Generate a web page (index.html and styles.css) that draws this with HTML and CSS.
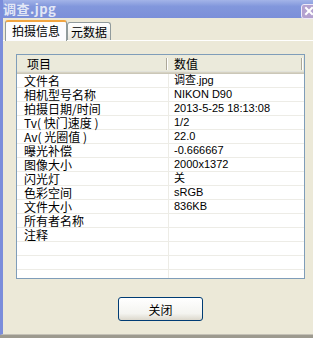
FILE: index.html
```html
<!DOCTYPE html>
<html lang="zh-CN">
<head>
  <meta charset="UTF-8">
  <title>调查.jpg</title>
  <link rel="stylesheet" href="styles.css">
</head>
<body>
  <div class="window">
    <div class="titlebar">
      <span class="title">调查.jpg</span>
      <span class="close-btn">
        <svg width="10" height="10" viewBox="0 0 10 10"><path d="M2 2 L8 8 M8 2 L2 8" stroke="#fff" stroke-width="2" stroke-linecap="square"/></svg>
      </span>
    </div>

    <div class="tabs">
      <div class="tab active">拍摄信息</div>
      <div class="tab">元数据</div>
    </div>

    <div class="panel">
      <div class="listview">
        <div class="lv-header">
          <div class="hd-name">项目</div>
          <div class="hd-value">数值</div>
        </div>
        <div class="lv-row"><div class="cell-name">文件名</div><div class="cell-value">调查.jpg</div></div>
        <div class="lv-row"><div class="cell-name">相机型号名称</div><div class="cell-value">NIKON D90</div></div>
        <div class="lv-row"><div class="cell-name">拍摄日期/时间</div><div class="cell-value">2013-5-25 18:13:08</div></div>
        <div class="lv-row"><div class="cell-name">Tv( 快门速度 )</div><div class="cell-value">1/2</div></div>
        <div class="lv-row"><div class="cell-name">Av( 光圈值 )</div><div class="cell-value">22.0</div></div>
        <div class="lv-row"><div class="cell-name">曝光补偿</div><div class="cell-value">-0.666667</div></div>
        <div class="lv-row"><div class="cell-name">图像大小</div><div class="cell-value">2000x1372</div></div>
        <div class="lv-row"><div class="cell-name">闪光灯</div><div class="cell-value">关</div></div>
        <div class="lv-row"><div class="cell-name">色彩空间</div><div class="cell-value">sRGB</div></div>
        <div class="lv-row"><div class="cell-name">文件大小</div><div class="cell-value">836KB</div></div>
        <div class="lv-row"><div class="cell-name">所有者名称</div><div class="cell-value"></div></div>
        <div class="lv-row"><div class="cell-name">注释</div><div class="cell-value"></div></div>
        <div class="lv-row"><div class="cell-name"></div><div class="cell-value"></div></div>
        <div class="lv-row"><div class="cell-name"></div><div class="cell-value"></div></div>
        <div class="lv-row"><div class="cell-name"></div><div class="cell-value"></div></div>
      </div>

      <div class="actions">
        <button class="btn">关闭</button>
      </div>
    </div>
  </div>
</body>
</html>
```

FILE: styles.css
```css
body {
  margin: 0;
  padding: 0;
  width: 313px;
  height: 338px;
  overflow: hidden;
  background: #9d9a8f;
  font-family: "Noto Sans CJK SC", sans-serif;
  font-size: 12px;
  color: #000;
}

.window {
  height: 335px;
  background: #ece9d8;
  border-left: 3px solid #7b8ddb;
  border-bottom: 1px solid #c4c1b6;
  box-sizing: border-box;
  overflow: hidden;
}

/* Title bar */
.titlebar {
  height: 18px;
  display: flex;
  align-items: center;
  justify-content: space-between;
  background: linear-gradient(to bottom, #a3b4e8, #8297dc 35%, #7b8fd9);
}
.title {
  font-size: 13px;
  font-weight: bold;
  color: #e2e7f6;
  line-height: 18px;
  letter-spacing: 0.5px;
}
.close-btn {
  width: 14px;
  height: 13px;
  margin-right: -4px;
  margin-top: 4px;
  background: #b3a1cf;
  border: 1px solid #eeeaf8;
  border-radius: 3px;
  display: flex;
  align-items: center;
  justify-content: center;
}

/* Tabs */
.tabs {
  display: flex;
  align-items: flex-end;
  height: 20px;
  margin-top: 2px;
  padding-left: 2px;
}
.tab {
  height: 18px;
  width: 44px;
  box-sizing: border-box;
  border: 1px solid #919b9c;
  border-bottom: none;
  border-radius: 3px 3px 0 0;
  background: linear-gradient(to bottom, #fff, #f3f3ef 60%, #e6e4da);
  text-align: center;
  line-height: 17px;
}
.tab.active {
  width: 62px;
  height: 21px;
  margin-bottom: -1px;
  position: relative;
  background: #fcfcfe;
  border-top: 2px solid #f2a540;
  line-height: 18px;
}

/* Panel */
.panel {
  border-top: 1px solid #fff;
  padding: 13px 8px 0 13px;
}

.listview {
  height: 225px;
  box-sizing: border-box;
  border: 1px solid #7f9db9;
  background: #fff;
  overflow: hidden;
}

.lv-header {
  display: grid;
  grid-template-columns: 150px 135px;
  height: 19px;
  background: #ebeadb;
  box-shadow: inset 0 -1px #cbc7b8, inset 0 -2px #d6d2c2, inset 0 -3px #e2e2da;
}
.hd-name, .hd-value {
  position: relative;
  line-height: 17px;
}
.hd-name {
  padding-left: 10px;
}
.hd-value {
  padding-left: 7px;
}
.hd-name::after, .hd-value::after {
  content: "";
  position: absolute;
  right: 0;
  top: 3px;
  bottom: 4px;
  width: 1px;
  background: #aca899;
  box-shadow: 1px 0 #fff;
}

.lv-row {
  display: grid;
  grid-template-columns: 152px 1fr;
  height: 14px;
  box-sizing: border-box;
  border-bottom: 1px solid #edece6;
}
.cell-name {
  padding-left: 7px;
  border-right: 1px solid #edece6;
  line-height: 13px;
  white-space: nowrap;
}
.cell-value {
  padding-left: 5px;
  font-family: "Liberation Sans", "Noto Sans CJK SC", sans-serif;
  font-size: 11px;
  line-height: 13px;
  white-space: nowrap;
}

.actions {
  display: flex;
  justify-content: center;
  padding-top: 18px;
}
.btn {
  width: 85px;
  height: 24px;
  border: 1px solid #003c74;
  border-radius: 3px;
  background: linear-gradient(to bottom, #fff, #f4f4f0 70%, #dcd8cc);
  font-family: "Noto Sans CJK SC", sans-serif;
  font-size: 12px;
  color: #000;
  padding: 0;
}
```
